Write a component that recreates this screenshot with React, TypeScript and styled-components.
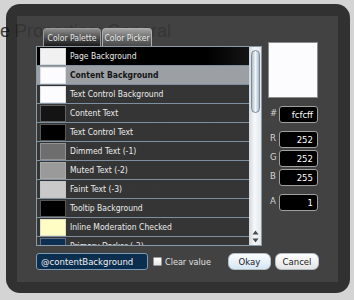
import styled, { createGlobalStyle } from 'styled-components'

const GlobalStyle = createGlobalStyle`
  html, body {
    margin: 0;
    padding: 0;
  }
  body {
    width: 354px;
    height: 300px;
    overflow: hidden;
    background: #d4d4d4;
  }
`

const uiFont = `"DejaVu Sans Condensed", "DejaVu Sans", "Liberation Sans", sans-serif`

// page behind the dialog
const Page = styled.div`
  position: relative;
  width: 354px;
  height: 300px;
  overflow: hidden;
  background: #d4d4d4;
  font-family: "Liberation Sans", Arial, sans-serif;
`

const PageTitle = styled.h1`
  margin: 0 0 0 -30px;
  padding-top: 21px;
  font-size: 18px;
  line-height: 20px;
  font-weight: normal;
  color: #3c3c3c;
  white-space: nowrap;
`

const PageForm = styled.div`
  display: flex;
  flex-direction: column;
  padding: 46px 0 0 112px;
  font-size: 9px;
  color: #ffffff;
`

const FormLine = styled.div<{ $top?: number }>`
  display: flex;
  gap: 18px;
  margin-top: ${p => p.$top ?? 0}px;
  white-space: nowrap;
`

// dialog
const Backdrop = styled.div`
  position: absolute;
  left: 6px;
  top: 4px;
  width: 344px;
  height: 289px;
  box-sizing: border-box;
  padding: 12px 12px 11px 11px;
  border-radius: 14px;
  background: rgba(14, 14, 14, 0.82);
  font-family: ${uiFont};
`

const Panel = styled.div`
  height: 100%;
  box-sizing: border-box;
  padding: 12px 19px;
  display: flex;
  flex-direction: column;
  gap: 7px;
  background: rgba(80, 80, 80, 0.55);
`

const Main = styled.div`
  display: flex;
  gap: 6px;
`

const LeftCol = styled.div`
  width: 226px;
  display: flex;
  flex-direction: column;
`

const Tabs = styled.div`
  display: flex;
  gap: 1px;
  padding-left: 7px;
  height: 18px;
`

const Tab = styled.div<{ $w: number; $active?: boolean }>`
  width: ${p => p.$w}px;
  display: flex;
  align-items: center;
  justify-content: center;
  border-radius: 4px 4px 0 0;
  border: 1px solid ${p => (p.$active ? '#9a9a9a' : '#b0b0b0')};
  border-bottom: none;
  box-sizing: border-box;
  background: ${p =>
    p.$active
      ? 'linear-gradient(#8c8c8c, #4a4a4a 55%, #1c1c1c)'
      : 'linear-gradient(#a4a4a4, #6a6a6a 55%, #4a4a4a)'};
  color: #e8e8e8;
  font-size: 8.5px;
`

const List = styled.div`
  display: flex;
  height: 200px;
  box-sizing: border-box;
  border: 1px solid #8a9aa6;
  background: rgba(40, 40, 40, 0.5);
  overflow: hidden;
`

const Rows = styled.div`
  flex: 1;
  overflow: hidden;
`

const Row = styled.div<{ $state?: 'hover' | 'selected' }>`
  display: flex;
  align-items: center;
  gap: 4px;
  height: 19px;
  box-sizing: border-box;
  padding-left: 3px;
  border-bottom: 1px solid #7e90a0;
  font-size: 8.5px;
  white-space: nowrap;
  color: ${p => (p.$state === 'selected' ? '#141414' : '#ececec')};
  font-weight: ${p => (p.$state === 'selected' ? 'bold' : 'normal')};
  background: ${p =>
    p.$state === 'hover'
      ? 'linear-gradient(to right, #000 80%, #151515)'
      : p.$state === 'selected'
        ? '#9ca0a4'
        : 'transparent'};
`

const Swatch = styled.div<{ $c: string }>`
  width: 26px;
  height: 17px;
  box-sizing: border-box;
  border: 1px solid rgba(190, 190, 190, 0.45);
  background: ${p => p.$c};
  flex-shrink: 0;
`

const Scrollbar = styled.div`
  width: 12px;
  display: flex;
  flex-direction: column;
  align-items: center;
  padding: 3px 0 2px;
  box-sizing: border-box;
  background: linear-gradient(to right, #cfd6dc, #f6f8fa 45%, #e2e7eb);
`

const Thumb = styled.div`
  width: 9px;
  height: 63px;
  box-sizing: border-box;
  border: 1px solid #7b8c9a;
  border-radius: 5px;
  background: linear-gradient(to right, #aebdca, #f2f6f9 50%, #a9b9c7);
`

const Spacer = styled.div`
  flex: 1;
`

const Arrow = styled.svg`
  display: block;
  margin-top: 3px;
`

const RightCol = styled.div`
  width: 51px;
  padding-top: 14px;
  display: flex;
  flex-direction: column;
`

const Preview = styled.div`
  width: 50px;
  height: 56px;
  box-sizing: border-box;
  border: 1px solid #8c8c8c;
  background: #fcfcff;
`

const Field = styled.div<{ $top: number }>`
  display: flex;
  margin-top: ${p => p.$top}px;
`

const FieldLabel = styled.span`
  width: 11px;
  padding: 1px 0 0 2px;
  box-sizing: border-box;
  font-size: 9.5px;
  color: #d4d4d4;
`

const ValueBox = styled.div`
  width: 39px;
  height: 17px;
  box-sizing: border-box;
  padding: 0 4px;
  border: 1px solid #a0a0a0;
  border-radius: 3px;
  background: #000;
  color: #fff;
  font-size: 9.5px;
  line-height: 15px;
  text-align: right;
`

const Footer = styled.div`
  display: flex;
  align-items: center;
  height: 17px;
`

const NameInput = styled.div`
  width: 112px;
  height: 17px;
  box-sizing: border-box;
  padding-left: 4px;
  border: 1px solid #7d9bb4;
  border-radius: 3px;
  background: #0b2d4e;
  color: #f0f0f0;
  font-size: 9.5px;
  line-height: 15px;
`

const Check = styled.span`
  width: 9px;
  height: 9px;
  margin-left: 5px;
  box-sizing: border-box;
  border: 1px solid #9a9a9a;
  border-radius: 1px;
  background: linear-gradient(#ffffff, #e6e6e6);
`

const CheckLabel = styled.span`
  margin-left: 3px;
  font-size: 9px;
  color: #e2e2e2;
`

const Button = styled.div<{ $w: number; $primary?: boolean }>`
  width: ${p => p.$w}px;
  height: 17px;
  margin-left: 4px;
  box-sizing: border-box;
  display: flex;
  align-items: center;
  justify-content: center;
  border: 1px solid #b4bcc4;
  border-radius: 6px;
  background: ${p =>
    p.$primary ? 'linear-gradient(#fbfdff, #d6e6f3)' : 'linear-gradient(#ffffff, #e4e4e4)'};
  color: #1a1a1a;
  font-size: 9.5px;
`

const palette: [string, string][] = [
  ['Page Background', '#f1f1f1'],
  ['Content Background', '#fcfcff'],
  ['Text Control Background', '#fcfcff'],
  ['Content Text', '#141414'],
  ['Text Control Text', '#000000'],
  ['Dimmed Text (-1)', '#6e6e6e'],
  ['Muted Text (-2)', '#9a9a9a'],
  ['Faint Text (-3)', '#c9c9c9'],
  ['Tooltip Background', '#000000'],
  ['Inline Moderation Checked', '#fffdc4'],
  ['Primary Darker (-3)', '#0c2f52'],
]

export default function App() {
  return (
    <Page>
      <GlobalStyle />
      <PageTitle>Style Properties: General</PageTitle>
      <PageForm>
        <FormLine>
          <span>Color</span>
          <span>Size</span>
          <span>Font Family</span>
        </FormLine>
        <FormLine $top={19}>
          <span>Underline</span>
          <span>Overline</span>
          <span>Line-Through</span>
        </FormLine>
        <FormLine $top={9}>
          <span>Background</span>
        </FormLine>
        <FormLine $top={5}>
          <span>Color</span>
          <span>Image</span>
        </FormLine>
        <FormLine $top={24}>
          <span>Border Color</span>
        </FormLine>
      </PageForm>

      <Backdrop>
        <Panel>
          <Main>
            <LeftCol>
              <Tabs>
                <Tab $w={58} $active>Color Palette</Tab>
                <Tab $w={50}>Color Picker</Tab>
              </Tabs>
              <List>
                <Rows>
                  {palette.map(([name, color], i) => (
                    <Row key={name} $state={i === 0 ? 'hover' : i === 1 ? 'selected' : undefined}>
                      <Swatch $c={color} />
                      {name}
                    </Row>
                  ))}
                </Rows>
                <Scrollbar>
                  <Thumb />
                  <Spacer />
                  <Arrow width="7" height="5" viewBox="0 0 7 5">
                    <path d="M3.5 0.5 L6.5 4.5 L0.5 4.5 Z" fill="#4a4a4a" />
                  </Arrow>
                  <Arrow width="7" height="5" viewBox="0 0 7 5">
                    <path d="M0.5 0.5 L6.5 0.5 L3.5 4.5 Z" fill="#4a4a4a" />
                  </Arrow>
                </Scrollbar>
              </List>
            </LeftCol>
            <RightCol>
              <Preview />
              <Field $top={8}>
                <FieldLabel>#</FieldLabel>
                <ValueBox>fcfcff</ValueBox>
              </Field>
              <Field $top={8}>
                <FieldLabel>R</FieldLabel>
                <ValueBox>252</ValueBox>
              </Field>
              <Field $top={2}>
                <FieldLabel>G</FieldLabel>
                <ValueBox>252</ValueBox>
              </Field>
              <Field $top={2}>
                <FieldLabel>B</FieldLabel>
                <ValueBox>255</ValueBox>
              </Field>
              <Field $top={8}>
                <FieldLabel>A</FieldLabel>
                <ValueBox>1</ValueBox>
              </Field>
            </RightCol>
          </Main>
          <Footer>
            <NameInput>@contentBackground</NameInput>
            <Check />
            <CheckLabel>Clear value</CheckLabel>
            <Spacer />
            <Button $w={43} $primary>Okay</Button>
            <Button $w={44}>Cancel</Button>
          </Footer>
        </Panel>
      </Backdrop>
    </Page>
  )
}
